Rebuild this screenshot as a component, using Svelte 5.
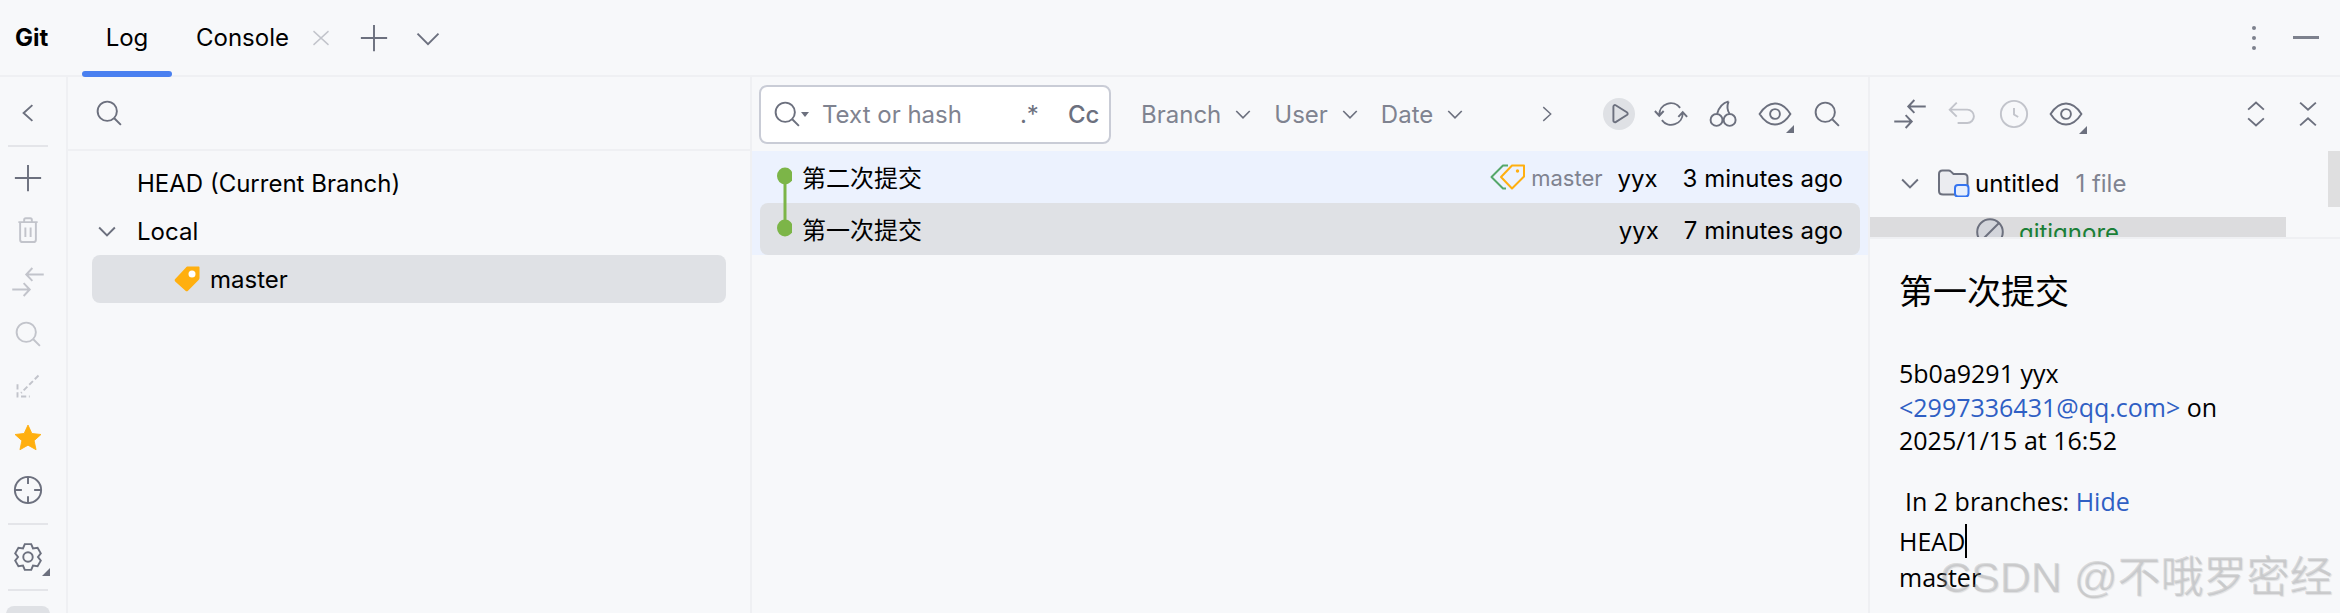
<script lang="ts">
  const icons: Record<string, string> = {
    chevBig: 'M2 5.5l6 6 6-6',
    chevSmall: 'M3.5 6L8 10.5 12.5 6',
    chevLeft: 'M10.5 3.5L5.5 8l5 4.5',
    chevRight: 'M5 2.5l6 5.5-6 5.5',
    plus: 'M8 .5v15M.5 8h15',
    close: 'M2 2.500l12 11M14 2.500l-12 11',
    search: 'M7 1.5a5.5 5.5 0 1 0 0 11a5.5 5.5 0 1 0 0-11M11 11l3.8 3.8',
    trash:
      'M2.5 3.5h11M5.8 3.5V2.2c0-.5.4-.9.9-.9h2.6c.5 0 .9.4.9.9v1.3M3.5 3.5v10c0 .8.6 1.4 1.4 1.4h6.2c.8 0 1.4-.6 1.4-1.4v-10M6.5 6.5v5.5M9.5 6.5v5.5',
    diff: 'M17 3.7H7M10.5 0L7 3.7l3.5 3.7M-1 12.3H9M5.5 8.6L9 12.3 5.5 16',
    target:
      'M8 .5a7.5 7.5 0 1 0 0 15a7.5 7.5 0 1 0 0-15M8 .5v4M8 11.5v4M.5 8h4M11.5 8h4',
    undo: 'M5 1.5L1 5.5l4 4M1 5.5h10a3.8 3.8 0 0 1 0 7.6H5.5',
    clock: 'M8 .5a7.5 7.5 0 1 0 0 15a7.5 7.5 0 1 0 0-15M8 4.5v3.8l2.4 1.4',
    eye: 'M-.8 8C2 3.6 5 2 8 2s6 1.6 8.8 6C14 12.4 11 14 8 14S2 12.4-.8 8zM8 5.2a2.8 2.8 0 1 0 0 5.6a2.8 2.8 0 1 0 0-5.6',
    sync: 'M1.3 8.5A6.6 6.6 0 0 1 13.2 4.5M14.7 7.5A6.6 6.6 0 0 1 2.8 11.5M-1.2 6.3l2.5 2.7 2.5-2.7M12.2 9.6l2.5-2.7 2.5 2.7',
    cherry:
      'M4.3 8a3.4 3.4 0 1 0 0 6.8a3.4 3.4 0 1 0 0-6.8M11.8 8a3.4 3.4 0 1 0 0 6.8a3.4 3.4 0 1 0 0-6.8M4.6 8C5.4 5 7.4 1.8 11.2.8M11.8 8c-1.4-2-1.6-4.6-.6-7.2',
    play: 'M4.8 3.8c0-.7.7-1.1 1.3-.8l6.4 4c.6.4.6 1.2 0 1.6l-6.4 4c-.6.3-1.3-.1-1.3-.8z',
    expand: 'M3.5 5.5L8 1.5l4.5 4M3.5 10.5L8 14.5l4.5-4',
    collapse: 'M3.5 1.5L8 5.5l4.5-4M3.5 14.5L8 10.5l4.5 4',
    diag: 'M14 2L4 12M2 7v7h7',
  };

  // six lobed outline for the settings icon
  function gearPath() {
    let d = '';
    for (let i = 0; i < 6; i++) {
      const a = ((i * 60 - 90) * Math.PI) / 180;
      const w = (14 * Math.PI) / 180;
      const m = a + Math.PI / 6;
      const pts = [
        [8 + 7.6 * Math.cos(a - w), 8 + 7.6 * Math.sin(a - w)],
        [8 + 7.6 * Math.cos(a + w), 8 + 7.6 * Math.sin(a + w)],
        [8 + 5.7 * Math.cos(m), 8 + 5.7 * Math.sin(m)],
      ];
      d += (i === 0 ? 'M' : 'L') + pts[0].map((n) => n.toFixed(2)).join(' ');
      d += 'L' + pts[1].map((n) => n.toFixed(2)).join(' ');
      d += 'L' + pts[2].map((n) => n.toFixed(2)).join(' ');
    }
    return d + 'zM8 5.3a2.7 2.7 0 1 0 0 5.4a2.7 2.7 0 1 0 0-5.4';
  }

  const commits = [
    { title: '第二次提交', user: 'yyx', time: '3 minutes ago', tag: true },
    { title: '第一次提交', user: 'yyx', time: '7 minutes ago', tag: false },
  ];
</script>

{#snippet ic(name: string, cls = '')}
  <svg class="ic {cls}" viewBox="0 0 16 16"><path d={icons[name]} /></svg>
{/snippet}

{#snippet corner()}
  <svg class="corner" viewBox="0 0 8 8"><path d="M8 0v8H0z" /></svg>
{/snippet}

<div class="app">
  <header class="top">
    <span class="brand">Git</span>
    <div class="tab active">Log</div>
    <div class="tab console">Console {@render ic('close', 'light small')}</div>
    <div class="add">{@render ic('plus')}</div>
    <div class="more">{@render ic('chevBig')}</div>
    <div class="spacer"></div>
    <svg class="kebab" viewBox="0 0 6 26"><circle cx="3" cy="3" r="2" /><circle cx="3" cy="13" r="2" /><circle cx="3" cy="23" r="2" /></svg>
    <div class="minimize"></div>
  </header>

  <div class="main">
    <aside class="rail">
      <div class="rbtn">{@render ic('chevLeft')}</div>
      <div class="rsep"></div>
      <div class="rbtn">{@render ic('plus')}</div>
      <div class="rbtn">{@render ic('trash', 'light')}</div>
      <div class="rbtn">{@render ic('diff', 'light')}</div>
      <div class="rbtn">{@render ic('search', 'light')}</div>
      <div class="rbtn">{@render ic('diag', 'light dashed')}</div>
      <div class="rbtn">
        <svg class="ic" viewBox="0 0 16 16"><path class="star" d="M8 .6l2.2 4.8 5.2.6-3.9 3.5 1.1 5.2L8 12.1l-4.6 2.6 1.1-5.2L.6 6l5.2-.6z" /></svg>
      </div>
      <div class="rbtn">{@render ic('target')}</div>
      <div class="rsep low"></div>
      <div class="rbtn gear">
        <svg class="ic" viewBox="0 0 16 16"><path d={gearPath()} /></svg>
        {@render corner()}
      </div>
      <div class="rsep"></div>
      <div class="rlast"></div>
    </aside>

    <section class="branches">
      <div class="bsearch">{@render ic('search')}</div>
      <div class="btree">
        <div class="bnode">HEAD (Current Branch)</div>
        <div class="bnode local">{@render ic('chevSmall')}<span>Local</span></div>
        <div class="bnode selected">
          <svg class="btag" viewBox="0 0 26 26"><path d="M12 1.5c.5-.6 1-1 2-1h10.5c.6 0 1 .4 1 1V12c0 .8-.3 1.4-.9 2L14 24.7c-.7.8-1.800.8-2.500 0L1.200 15.500c-.7-.7-.7-1.700 0-2.400z" /><circle cx="18" cy="8" r="3.500" /></svg>
          <span>master</span>
        </div>
      </div>
    </section>

    <section class="log">
      <div class="ltools">
        <div class="field">
          <div class="fsearch">{@render ic('search')}</div>
          <span class="caret"></span>
          <span class="ph">Text or hash</span>
          <span class="regex">.*</span>
          <span class="cc">Cc</span>
        </div>
        <div class="filter branch">Branch {@render ic('chevSmall')}</div>
        <div class="filter">User {@render ic('chevSmall')}</div>
        <div class="filter">Date {@render ic('chevSmall')}</div>
        <div class="next">{@render ic('chevRight', 'small')}</div>
        <div class="tbtn played">{@render ic('play')}</div>
        <div class="tbtn">{@render ic('sync')}</div>
        <div class="tbtn">{@render ic('cherry')}</div>
        <div class="tbtn">{@render ic('eye')}{@render corner()}</div>
        <div class="tbtn">{@render ic('search')}</div>
      </div>
      <div class="commits">
        {#each commits as c, i}
          <div class="commit" class:current={i === 1}>
            <svg class="graph" viewBox="0 0 32 52">
              {#if i === 0}
                <path class="gline" d="M25 25V52" />
              {:else}
                <path class="gline" d="M25 0V25" />
              {/if}
              <ellipse class="gdot" cx="25" cy="25" rx="8" ry="8.500" />
            </svg>
            <span class="ctitle">{c.title}</span>
            {#if c.tag}
              <svg class="dtag" viewBox="0 0 36 26">
                <path class="dgreen" d="M18 1.500H13L1.500 13 13 24.500h3" />
                <path class="dorange" d="M34 1.500H22L11 13l11 11.500L34 12.500z" />
                <circle class="ddot" cx="27.500" cy="7" r="1.700" />
              </svg>
              <span class="ctag">master</span>
            {/if}
            <span class="cuser">{c.user}</span>
            <span class="ctime">{c.time}</span>
          </div>
        {/each}
      </div>
    </section>

    <section class="side">
      <div class="stools">
        <div class="sbtn">{@render ic('diff')}</div>
        <div class="sbtn">{@render ic('undo', 'light')}</div>
        <div class="sbtn">{@render ic('clock', 'light')}</div>
        <div class="sbtn">{@render ic('eye')}{@render corner()}</div>
        <div class="spacer"></div>
        <div class="sbtn">{@render ic('expand')}</div>
        <div class="sbtn">{@render ic('collapse')}</div>
      </div>
      <div class="changes">
        <div class="thumb"></div>
        <div class="froot">
          {@render ic('chevSmall')}
          <svg class="folder" viewBox="0 0 32 28">
            <path class="fbody" d="M1 5c0-2 1.500-3.500 3.500-3.500h6c1 0 1.800.4 2.500 1.100l2.500 2.400h10.500c2 0 3.500 1.500 3.500 3.500V22c0 2-1.500 3.500-3.500 3.500h-21C2.500 25.500 1 24 1 22z" />
            <rect class="fbadge" x="17" y="16" width="13.500" height="11.500" rx="3" />
          </svg>
          <span class="fname">untitled</span>
          <span class="fcount">1 file</span>
        </div>
        <div class="fitem">
          <svg class="ignored" viewBox="0 0 28 28"><circle cx="14" cy="14" r="12.800" /><path d="M5 23L23 5" /></svg>
          <span>.gitignore</span>
        </div>
      </div>
      <div class="details">
        <h2>第一次提交</h2>
        <p class="meta">5b0a9291 yyx<br /><a href="#mail">&lt;2997336431@qq.com&gt;</a> on<br />2025/1/15 at 16:52</p>
        <p class="in">In 2 branches: <a href="#hide">Hide</a></p>
        <p class="names"><span class="cursor">HEAD</span><br />master</p>
      </div>
    </section>
  </div>
  <div class="watermark">CSDN @不哦罗密经</div>
</div>

<style>
  :global(body) {
    margin: 0;
    background: #f7f8fa;
  }

  .app {
    position: relative;
    height: 613px;
    overflow: hidden;
    background: #f7f8fa;
    color: #000;
    font-family: Inter, 'Noto Sans CJK SC', sans-serif;
    font-size: 24px;
  }

  .ic {
    width: 28px;
    height: 28px;
    overflow: visible;
    flex: none;
    fill: none;
    stroke: #6c707e;
    stroke-width: 1.100;
  }

  .ic path {
    fill: none;
  }

  .ic.light {
    stroke: #c2c4cb;
  }

  .ic.dashed {
    stroke-dasharray: 3 1.500;
  }

  .ic .star {
    fill: #ffaf0f;
    stroke: #ffaf0f;
    stroke-width: 0.500;
    stroke-linejoin: round;
  }

  .corner {
    position: absolute;
    width: 8px;
    height: 8px;
    fill: #6c707e;
  }

  .spacer {
    flex: 1;
  }

  .top {
    display: flex;
    align-items: center;
    height: 75px;
    border-bottom: 2px solid #eff0f3;
  }

  .brand {
    margin-left: 15px;
    width: 67px;
    font-weight: 700;
  }

  .tab {
    position: relative;
    display: flex;
    align-items: center;
    height: 75px;
  }

  .tab.active {
    width: 90px;
    justify-content: center;
  }

  .tab.active::after {
    content: '';
    position: absolute;
    left: 0;
    right: 0;
    bottom: -2px;
    height: 6px;
    border-radius: 3px;
    background: #4a80f0;
  }

  .console {
    margin-left: 24px;
    gap: 22px;
  }

  .ic.small {
    width: 20px;
    height: 20px;
  }

  .add {
    display: flex;
    margin-left: 29px;
  }

  .more {
    display: flex;
    margin-left: 26px;
  }

  .kebab {
    width: 6px;
    height: 26px;
    fill: #7d818d;
    margin-right: 36px;
  }

  .minimize {
    width: 26px;
    height: 3px;
    background: #7d818d;
    margin-right: 21px;
  }

  .main {
    display: flex;
    height: 536px;
  }

  .rail {
    display: flex;
    flex-direction: column;
    align-items: center;
    flex: none;
    box-sizing: content-box;
    width: 56px;
    padding: 10px 10px 0 0;
    border-right: 2px solid #eff0f3;
  }

  .rbtn {
    position: relative;
    display: flex;
    align-items: center;
    justify-content: center;
    flex: none;
    width: 100%;
    height: 52px;
  }

  .rsep {
    flex: none;
    width: 40px;
    height: 2px;
    margin: 6px 0 5px;
    background: #e4e5e9;
  }

  .rsep.low {
    margin-top: 7px;
    margin-bottom: 6px;
  }

  .gear .corner {
    right: 6px;
    bottom: 7px;
  }

  .rlast {
    flex: none;
    width: 44px;
    height: 50px;
    margin-top: 10px;
    border-radius: 8px;
    background: #dfe1e5;
  }

  .branches {
    flex: none;
    width: 682px;
    border-right: 2px solid #eff0f3;
  }

  .bsearch {
    display: flex;
    align-items: center;
    height: 72px;
    padding-left: 27px;
    border-bottom: 2px solid #eff0f3;
  }

  .btree {
    padding: 8px 24px 0;
  }

  .bnode {
    display: flex;
    align-items: center;
    height: 48px;
    padding-left: 45px;
  }

  .bnode.local {
    padding-left: 1px;
    gap: 16px;
  }

  .selected {
    padding-left: 82px;
    gap: 10px;
    border-radius: 8px;
    background: #dfe1e5;
  }

  .btag {
    width: 26px;
    height: 26px;
    fill: #ffaf0f;
  }

  .btag circle {
    fill: #fff;
  }

  .log {
    flex: none;
    width: 1116px;
    border-right: 2px solid #eff0f3;
  }

  .ltools {
    display: flex;
    align-items: center;
    height: 74px;
    padding-left: 7px;
  }

  .field {
    position: relative;
    display: flex;
    align-items: center;
    box-sizing: border-box;
    flex: none;
    width: 352px;
    height: 59px;
    padding-left: 12px;
    background: #fff;
    border: 2px solid #c9ccd6;
    border-radius: 8px;
    color: #6c707e;
    white-space: nowrap;
  }

  .fsearch {
    display: flex;
  }

  .caret {
    width: 0;
    height: 0;
    border: 4px solid transparent;
    border-top: 5px solid #6c707e;
    border-bottom: 0;
  }

  .ph {
    margin-left: 13px;
    color: #7f8390;
  }

  .regex {
    margin-left: 58px;
  }

  .cc {
    margin-left: 29px;
    font-weight: 500;
  }

  .filter {
    display: flex;
    align-items: center;
    gap: 10px;
    margin-left: 19px;
    color: #7f8390;
  }

  .filter .ic {
    width: 24px;
  }

  .filter.branch {
    margin-left: 30px;
  }

  .next {
    display: flex;
    margin-left: 70px;
    margin-right: 46px;
  }

  .tbtn {
    position: relative;
    display: flex;
    align-items: center;
    justify-content: center;
    flex: none;
    width: 32px;
    height: 32px;
    margin-right: 20px;
    border-radius: 50%;
  }

  .tbtn.played {
    background: #dfe1e5;
  }

  .tbtn .corner {
    right: -3px;
    bottom: -3px;
  }

  .commits {
    height: 104px;
    padding: 0 8px;
    background: #ecf2fe;
  }

  .commit {
    display: flex;
    align-items: center;
    height: 52px;
    padding-right: 17px;
    border-radius: 8px;
  }

  .commit.current {
    background: #dfe1e5;
  }

  .graph {
    flex: none;
    width: 32px;
    height: 52px;
    margin-right: 10px;
  }

  .gline {
    stroke: #7cb548;
    stroke-width: 3;
  }

  .gdot {
    fill: #7cb548;
  }

  .ctitle {
    margin-top: 4px;
    line-height: 1;
    margin-right: auto;
  }

  .dtag {
    width: 36px;
    height: 26px;
    margin-right: 5px;
    fill: none;
    stroke-width: 2;
    stroke-linejoin: round;
  }

  .dgreen {
    stroke: #55a76a;
  }

  .dorange {
    stroke: #ffaf0f;
  }

  .ddot {
    fill: #ffaf0f;
  }

  .ctag {
    margin-top: 2px;
    font-size: 22px;
    color: #7f8390;
  }

  .cuser {
    margin-top: 2px;
    margin-left: 15px;
  }

  .ctime {
    margin-top: 2px;
    margin-left: 25px;
  }

  .side {
    position: relative;
    flex: 1;
    min-width: 0;
  }

  .stools {
    display: flex;
    align-items: center;
    height: 74px;
    padding-left: 14px;
    padding-right: 6px;
  }

  .sbtn {
    position: relative;
    display: flex;
    justify-content: center;
    width: 52px;
    flex: none;
  }

  .sbtn .corner {
    right: 5px;
    bottom: -6px;
  }

  .changes {
    position: relative;
    box-sizing: border-box;
    height: 88px;
    overflow: hidden;
    border-bottom: 2px solid #eff0f3;
  }

  .thumb {
    position: absolute;
    right: 0;
    top: 0;
    width: 12px;
    height: 56px;
    background: #dfdfe0;
  }

  .froot {
    display: flex;
    align-items: center;
    height: 34px;
    margin-top: 15px;
    padding-left: 26px;
  }

  .folder {
    flex: none;
    width: 32px;
    height: 28px;
    margin-left: 14px;
    margin-right: 5px;
  }

  .fbody {
    fill: #ebecf0;
    stroke: #6c707e;
    stroke-width: 2;
  }

  .fbadge {
    fill: #e7effd;
    stroke: #3574f0;
    stroke-width: 2;
  }

  .fcount {
    margin-left: 16px;
    color: #7f8390;
  }

  .fitem {
    display: flex;
    align-items: center;
    width: 416px;
    height: 30px;
    margin-top: 17px;
    padding-left: 106px;
    box-sizing: border-box;
    background: #dcdcde;
    color: #1a7f37;
    gap: 8px;
  }

  .ignored {
    flex: none;
    width: 28px;
    height: 28px;
    fill: #d3d5db;
    stroke: #6c707e;
    stroke-width: 2;
  }

  .details {
    padding-left: 29px;
    font-family: 'Open Sans', 'Noto Sans CJK SC', sans-serif;
    font-size: 25px;
    line-height: 33.500px;
  }

  h2 {
    margin: 32px 0 0;
    font-family: 'Liberation Serif', 'Noto Sans CJK SC', serif;
    font-size: 34px;
    font-weight: 400;
    line-height: 44px;
  }

  p {
    margin: 0;
  }

  .meta {
    margin-top: 42px;
  }

  .in {
    margin-top: 27px;
    padding-left: 6px;
  }

  .names {
    margin-top: 5px;
    line-height: 36px;
  }

  .cursor {
    display: inline-block;
    height: 34px;
    border-right: 2px solid #000;
    line-height: 34px;
  }

  a {
    color: #2f5fc4;
    text-decoration: none;
  }

  .watermark {
    position: absolute;
    left: 1940px;
    top: 550px;
    font-family: 'Liberation Sans', 'Noto Sans CJK SC', sans-serif;
    font-size: 43px;
    line-height: 54px;
    white-space: nowrap;
    color: rgba(150, 150, 150, 0.3);
    text-shadow: 1px 1px 1px rgba(120, 120, 120, 0.2);
  }
</style>
